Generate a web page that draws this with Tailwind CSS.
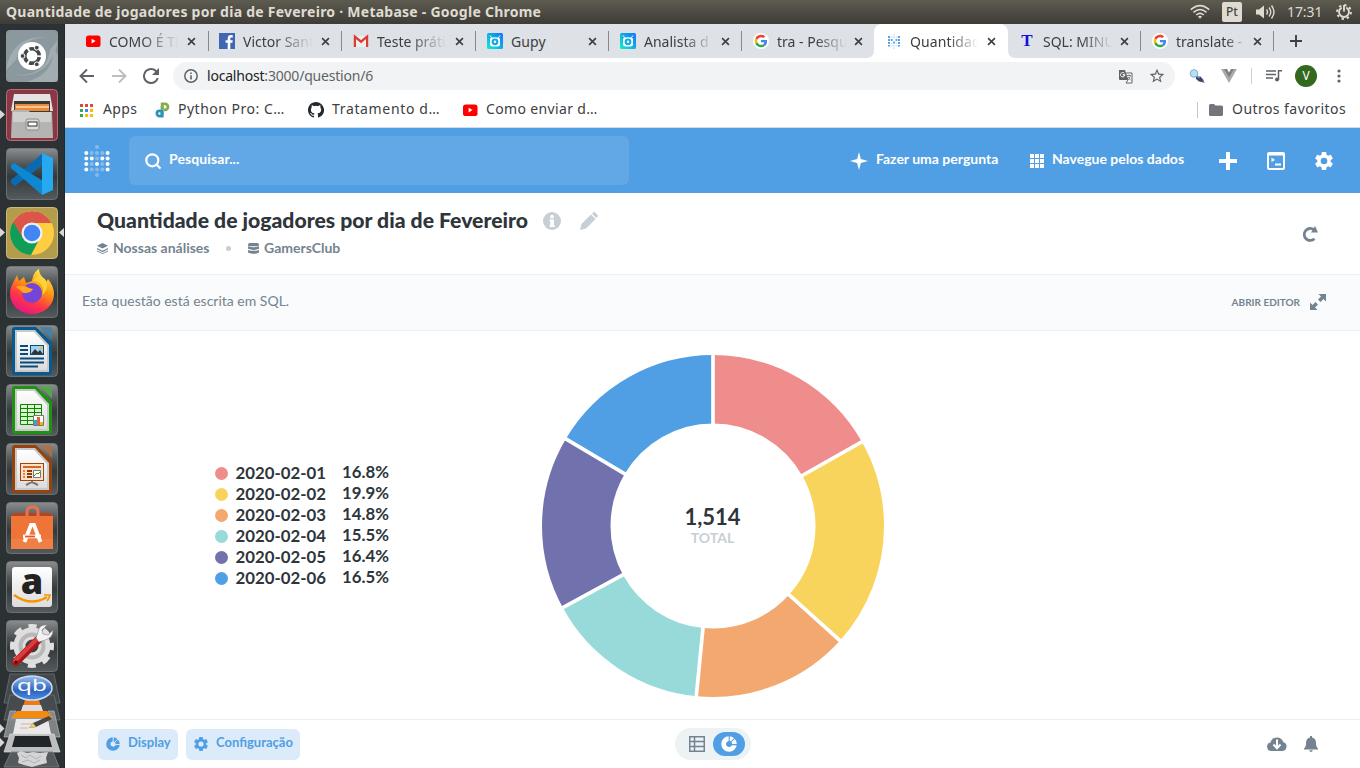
<!DOCTYPE html>
<html lang="pt">
<head>
<meta charset="utf-8">
<title>Quantidade de jogadores por dia de Fevereiro · Metabase</title>
<script src="https://cdn.jsdelivr.net/npm/@tailwindcss/browser@4"></script>
</head>
<body class="w-[1360px] h-[768px] overflow-hidden flex flex-col bg-white font-['Noto_Sans',sans-serif]">

<!-- shared symbols -->
<svg width="0" height="0" class="absolute">
  <defs>
    <linearGradient id="tile" x1="0" y1="0" x2="0" y2="1"><stop offset="0" stop-color="#8b8e8f"/><stop offset=".35" stop-color="#4a4f51"/><stop offset=".55" stop-color="#34393b"/><stop offset="1" stop-color="#555a5c"/></linearGradient>
    <linearGradient id="paper" x1="0" y1="0" x2="0" y2="1"><stop offset="0" stop-color="#fff"/><stop offset="1" stop-color="#dcdcdc"/></linearGradient>
    <linearGradient id="fire" x1=".8" y1="0" x2=".3" y2="1"><stop offset="0" stop-color="#fff44f"/><stop offset=".4" stop-color="#ff980e"/><stop offset=".7" stop-color="#ff3647"/><stop offset="1" stop-color="#e31587"/></linearGradient>
    <linearGradient id="gup" x1="0" y1="1" x2="1" y2="0"><stop offset="0" stop-color="#10f0c8"/><stop offset=".55" stop-color="#10a8e8"/><stop offset="1" stop-color="#1672ff"/></linearGradient>
    <linearGradient id="qbfill" x1="0" y1="0" x2="0" y2="1"><stop offset="0" stop-color="#9cc0ee"/><stop offset=".6" stop-color="#2a63bf"/><stop offset="1" stop-color="#4c8be0"/></linearGradient>
    <symbol id="x" viewBox="0 0 10 10"><path d="M1.2 1.2l7.6 7.6M8.8 1.2L1.2 8.8" stroke="#3c4043" stroke-width="1.8" fill="none"/></symbol>
    <symbol id="yt" viewBox="0 0 16 16"><rect x="1" y="2.5" width="14.5" height="11.5" rx="2.6" fill="#f00"/><path d="M6.600 5.800v4.600l4-2.300z" fill="#fff"/></symbol>
    <symbol id="goog" viewBox="0 0 48 48"><circle cx="24" cy="24" r="24" fill="#fff"/><g transform="translate(5 5) scale(.79)"><path fill="#EA4335" d="M24 9.5c3.54 0 6.71 1.22 9.21 3.6l6.85-6.85C35.9 2.38 30.47 0 24 0 14.62 0 6.51 5.38 2.56 13.22l7.98 6.19C12.43 13.72 17.74 9.5 24 9.5z"/><path fill="#4285F4" d="M46.98 24.55c0-1.57-.15-3.09-.38-4.55H24v9.02h12.94c-.58 2.96-2.26 5.48-4.78 7.18l7.73 6c4.51-4.18 7.09-10.36 7.09-17.65z"/><path fill="#FBBC05" d="M10.53 28.59c-.48-1.45-.76-2.99-.76-4.59s.27-3.14.76-4.59l-7.98-6.19C.92 16.46 0 20.12 0 24c0 3.88.92 7.54 2.56 10.78l7.97-6.19z"/><path fill="#34A853" d="M24 48c6.48 0 11.93-2.13 15.89-5.81l-7.73-6c-2.15 1.45-4.92 2.3-8.16 2.3-6.26 0-11.57-4.22-13.47-9.91l-7.98 6.19C6.51 42.62 14.62 48 24 48z"/></g></symbol>
    <symbol id="gupy" viewBox="0 0 16 16"><rect width="16" height="16" rx="1.5" fill="url(#gup)"/><path d="M3 2.500l1.700 2.300M13 2.500l-1.700 2.300" stroke="#fff" stroke-width="1"/><path d="M3 5.500q5-2.500 10 0v5.500q0 2.500-2.500 2.500h-5Q3 13.500 3 11z" fill="#fff"/><circle cx="8" cy="8.800" r="3.400" fill="#12a9e4"/><circle cx="8" cy="8.800" r="1.200" fill="#fff"/></symbol>
    <symbol id="gear" viewBox="2 2 20 20"><path fill-rule="evenodd" d="M19.430 12.980c.04-.32.07-.64.07-.98s-.03-.66-.07-.98l2.110-1.650c.19-.15.24-.42.12-.64l-2-3.460c-.12-.22-.39-.3-.61-.22l-2.490 1c-.52-.4-1.080-.73-1.690-.98l-.38-2.650C14.460 2.180 14.250 2 14 2h-4c-.25 0-.46.18-.49.42l-.38 2.650c-.61.25-1.170.59-1.690.98l-2.490-1c-.23-.09-.49 0-.61.22l-2 3.460c-.13.22-.07.49.12.64l2.110 1.650c-.04.32-.07.65-.07.98s.03.66.07.98l-2.110 1.650c-.19.15-.24.42-.12.64l2 3.460c.12.22.39.3.61.22l2.490-1c.52.4 1.080.73 1.690.98l.38 2.650c.03.24.24.42.49.42h4c.25 0 .46-.18.49-.42l.38-2.650c.61-.25 1.170-.59 1.690-.98l2.490 1c.23.09.49 0 .61-.22l2-3.460c.12-.22.07-.49-.12-.64zM12 15.700a3.700 3.700 0 1 1 0-7.400 3.700 3.700 0 0 1 0 7.400z" fill="currentColor"/></symbol>
    <symbol id="donut" viewBox="0 0 16 16"><circle cx="8" cy="8" r="5.400" fill="none" stroke="currentColor" stroke-width="4.800"/><path d="M8.200 5.800V0M9.800 6.200l4-4M10 8.600h6" stroke="var(--gap)" stroke-width="1.100"/></symbol>
    <symbol id="base" viewBox="0 0 52 52"><rect x=".5" y=".5" width="51" height="51" rx="4" fill="url(#tile)" stroke="#7d8182" stroke-opacity=".7"/></symbol>
    <symbol id="doc" viewBox="0 0 52 52"><path d="M6 5q0-3 3-3H30L46 18V47q0 3-3 3H9q-3 0-3-3V5z" fill="currentColor"/><path d="M34 2h9q3 0 3 3v10z" fill="currentColor" opacity=".8"/><path d="M34 2h9q3 0 3 3v10z" fill="#fff" opacity=".2"/><path d="M9 5h20l14 15v27H9z" fill="#c9c9c9"/><path d="M11 7h17l13 14v24H11z" fill="url(#paper)"/></symbol>
  </defs>
</svg>

<!-- desktop top panel -->
<header class="h-6 shrink-0 flex items-center justify-between pl-1.5 pr-2 bg-linear-to-b from-[#5e5b50] to-[#3e3c37] text-[#dfdbd2]">
  <div class="text-[14px] font-bold leading-6 tracking-[0.25px] whitespace-nowrap">Quantidade de jogadores por dia de Fevereiro · Metabase - Google Chrome</div>
  <div class="flex items-center">
    <svg class="w-5 h-4 mr-3" viewBox="0 0 20 16" fill="none" stroke="#dfdbd2" stroke-width="1.600"><path d="M.8 5.600Q10-2.500 19.200 5.600M3.500 8.300q6.500-5.600 13 0M6.200 11q3.800-3.200 7.600 0"/><path d="M8 12.500q2-1.500 4 0l-2 2.300z" fill="#dfdbd2" stroke="none"/></svg>
    <div class="w-5 h-5 rounded-xs bg-[#dfdbd2] text-[#454340] text-[12px] leading-5 font-medium text-center mr-[13px]">Pt</div>
    <svg class="w-5 h-4 mr-[12px]" viewBox="0 0 20 16"><path d="M1 5.500h3L9 1.500v13l-5-4H1z" fill="#dfdbd2"/><path d="M11.500 5.500q2 2.500 0 5M14 3.500q3.500 4.500 0 9M16.500 1.500q5 6.500 0 13" fill="none" stroke="#dfdbd2" stroke-width="1.400"/></svg>
    <div class="w-[37px] text-[14px] leading-6 tracking-[-0.1px] mr-3 whitespace-nowrap">17:31</div>
    <svg class="w-4 h-4" viewBox="0 0 16 16"><circle cx="8" cy="8" r="6.900" fill="none" stroke="#dfdbd2" stroke-width="2" stroke-dasharray="2.400 3.020"/><path d="M5.700 3.600a5 5 0 1 0 4.600 0M8 1v6.500" fill="none" stroke="#dfdbd2" stroke-width="1.900"/></svg>
  </div>
</header>

<div class="flex flex-1 min-h-0">
  <!-- launcher -->
  <aside class="relative w-[65px] shrink-0 bg-[#2c3133] border-r border-[#23282a] pt-1.5 pl-1.5 flex flex-col gap-[7px]">
    <svg class="w-[52px] h-[52px] shrink-0" viewBox="0 0 52 52"><rect width="52" height="52" rx="4" fill="#8b999f"/><path d="M0 40C4 16 20 4 44 8 28 6 14 12 10 30zM52 10C48 36 30 50 6 44c24 4 36-8 38-24zM20 52c16-4 28-14 28-34l4 8v26z" fill="#fff" opacity=".2"/><circle cx="26" cy="26" r="14" fill="#fff"/><circle cx="26" cy="26" r="7.300" fill="none" stroke="#43484c" stroke-width="3.600" stroke-dasharray="13.300 2" stroke-dashoffset="-1"/><circle cx="16.500" cy="26" r="2.400" fill="#43484c" stroke="#fff"/><circle cx="30.800" cy="17.700" r="2.400" fill="#43484c" stroke="#fff"/><circle cx="30.800" cy="34.300" r="2.400" fill="#43484c" stroke="#fff"/></svg>
    <svg class="w-[52px] h-[52px] shrink-0" viewBox="0 0 52 52"><rect x=".5" y=".5" width="51" height="51" rx="4" fill="#8c3744" stroke="#b07078"/><path d="M8 5h36l3 17H5z" fill="#e4e4e4"/><path d="M8 12h36v12H8z" fill="#3a3a38"/><path d="M9 15h34v7H9z" fill="#e88a3c"/><path d="M10 18h33" stroke="#ffd9a8" stroke-width="1.500"/><path d="M6 21h16l2 2h22l1 26H5z" fill="#b4b4b3"/><path d="M7 23h38v10H7z" fill="#cfcfce"/><rect x="20" y="30" width="13" height="11" rx="2" fill="#ddd" stroke="#8a8a8a"/><rect x="22" y="33" width="9" height="4" fill="#fff" stroke="#333"/></svg>
    <svg class="w-[52px] h-[52px] shrink-0" viewBox="0 0 52 52"><use href="#base"/><path d="M37 5L5 32v3l4 3 29-22z" fill="#0c6bb0"/><path d="M8 15L5 17v3l31 27 1-14z" fill="#0f88d2"/><path d="M36 5l11 5v32l-11 5z" fill="#27a9f2"/></svg>
    <svg class="w-[52px] h-[52px] shrink-0" viewBox="0 0 52 52"><rect x=".5" y=".5" width="51" height="51" rx="4" fill="#b39c4c" stroke="#cbb979"/><circle cx="26" cy="26" r="22" fill="#ffcd40"/><path d="M26 26L7 15A22 22 0 0 0 25 48l9-17z" fill="#109d58"/><path d="M7 15a22 22 0 0 1 38.500 1H26L17 31z" fill="#db5548"/><circle cx="26" cy="26" r="10.500" fill="#f1f1f1"/><circle cx="26" cy="26" r="8.300" fill="#4285f4"/></svg>
    <svg class="w-[52px] h-[52px] shrink-0" viewBox="0 0 52 52"><use href="#base"/><path d="M11 9l2 6 5-4 2 6 6-2c1-6 3-10 7-12 0 6 5 9 7 13l2-3c4 5 6 10 6 15a22 20 0 0 1-44 0c0-8 4-12 7-19z" fill="url(#fire)"/><circle cx="26" cy="27" r="10" fill="#7544d8"/><path d="M10 21q7-3 13 1l4 1c-2 4-6 4-10 4-2-3-4-4-7-6z" fill="#ffa51e"/><path d="M27 15c9 0 12 8 9 14 5-4 7-10 3-16l-6-4z" fill="#ffd43a"/></svg>
    <svg class="w-[52px] h-[52px] shrink-0 text-[#075a91]" viewBox="0 0 52 52"><use href="#base"/><use href="#doc"/><path d="M14 21h8M14 25h8M14 29h8M14 33.500h24M14 37.500h24M14 41.500h18" stroke="#0a4b79" stroke-width="2"/><rect x="24.500" y="20.500" width="13" height="9" fill="#9ed4f2" stroke="#0a4b79"/><path d="M25 29l4-5 3 3 2-2 3 4z" fill="#333"/><circle cx="35" cy="23" r="1.500" fill="#e9b93c"/></svg>
    <svg class="w-[52px] h-[52px] shrink-0 text-[#1d9310]" viewBox="0 0 52 52"><use href="#base"/><use href="#doc"/><path d="M14.500 20.500h21v20h-21z" fill="#d9f7cf"/><path d="M14.500 20.500h21v20h-21zM14.500 24.500h21M14.500 28.500h21M14.500 32.500h21M14.500 36.500h21M21.500 20.500v20M28.500 20.500v20" stroke="#138008" fill="none"/><path d="M27.500 31.500h10v10h-10z" fill="#fff" stroke="#777"/><path d="M28 36h3v5h-3z" fill="#29a8e0"/><path d="M31 33h3v8h-3z" fill="#e2632c"/><path d="M34 38h3v3h-3z" fill="#f0b800"/></svg>
    <svg class="w-[52px] h-[52px] shrink-0 text-[#97430e]" viewBox="0 0 52 52"><use href="#base"/><use href="#doc"/><rect x="14.500" y="20.500" width="23" height="17" fill="#fbe0cb" stroke="#a14409"/><path d="M17 24h18" stroke="#d2691e" stroke-width="2"/><path d="M17 28h2M17 31h2M17 34h2" stroke="#e78444" stroke-width="1.800"/><path d="M21 28h5M21 31h5M21 34h5" stroke="#8e3a08" stroke-width="1.800"/><path d="M27.500 27.500h7v7h-7z" fill="#fff" stroke="#777"/><path d="M28 33l3-3 1 1 2-2" stroke="#2d9a2d" fill="none"/><path d="M26 38v1l-6 3M26 39l6 3" stroke="#777" stroke-width="2" fill="none"/></svg>
    <svg class="w-[52px] h-[52px] shrink-0" viewBox="0 0 52 52"><use href="#base"/><path d="M7 11h38l2 5H5z" fill="#b8441c"/><path d="M5 14h42v33H5z" fill="#ee7537"/><path d="M5 37h42v10H5z" fill="#f07f45"/><path d="M21 18V10q0-5 5-5h1q5 0 5 5v8" fill="none" stroke="#e8724e" stroke-width="3"/><path d="M18.500 40L25 23h3l6.500 17" fill="none" stroke="#fff" stroke-width="3.800"/><path d="M17 34.500h18" stroke="#fff" stroke-width="3.600"/><path d="M19 34.500h10" stroke="#e95420" stroke-width="1.800"/></svg>
    <svg class="w-[52px] h-[52px] shrink-0" viewBox="0 0 52 52"><use href="#base"/><rect x="6" y="6" width="40" height="40" rx="3" fill="url(#paper)"/><text x="26" y="33" text-anchor="middle" font-family="Open Sans" font-weight="800" font-size="36" fill="#222">a</text><path d="M8 34q17 12 33 2" fill="none" stroke="#f79400" stroke-width="2.600"/><path d="M38 34h6q-1 4-3 6" fill="none" stroke="#f79400" stroke-width="1.700"/></svg>
    <svg class="w-[52px] h-[52px] shrink-0" viewBox="0 0 52 52"><use href="#base"/><circle cx="26" cy="26" r="19.500" fill="none" stroke="#e1e1e1" stroke-width="5" stroke-dasharray="8 7.310" stroke-dashoffset="4"/><circle cx="26" cy="26" r="12.500" fill="none" stroke="#dedede" stroke-width="12"/><circle cx="26" cy="26" r="11.500" fill="none" stroke="#b8b8b8" stroke-width="4"/><path d="M10 42L32 20" stroke="#a8161b" stroke-width="8" stroke-linecap="round"/><path d="M9 41L30 20" stroke="#d83c3c" stroke-width="4" stroke-linecap="round"/><circle cx="10" cy="42" r="1.600" fill="#500"/><path d="M30 18l3 4 6-2q8-2 8-10l-5 5-5-1-1-4 5-5q-8-1-9 7z" fill="#f2f2f2" stroke="#888" stroke-width=".6"/></svg>
    <!-- folded launcher stack -->
    <svg class="w-[58px] h-[96px] shrink-0 -ml-[3px] -mt-[6px]" viewBox="0 0 58 96"><g stroke="#74797b" stroke-opacity=".7"><path d="M7 1h44l6 29H1z" fill="#43484a"/><path d="M7 22h44l6 25H1z" fill="#454b4e"/></g><path d="M22 27h14l4 14H18z" fill="#ee7c16"/><path d="M20 32h18l2 6H18z" fill="#ddd"/><ellipse cx="29" cy="15" rx="20" ry="12" fill="url(#qbfill)" stroke="#c8dcf4" stroke-width="1.500"/><g transform="translate(29 18) scale(1.1 .75)"><text text-anchor="middle" font-family="Noto Sans" font-size="22" fill="#fff">qb</text></g><path d="M7 38h6l-4 7h40l-4-7h6l6 26H1z" fill="#9c9fa0" fill-opacity=".75" stroke="#b7b9ba" stroke-width=".7"/><path d="M14 38h30l6 7H8z" fill="#f58a12"/><path d="M13 46h32l3 15H10z" fill="#e9e9e9"/><path d="M18 51h14M17 55h8" stroke="#d99" stroke-width=".8"/><path d="M26 55l4-5 16-7 3 3-16 8z" fill="#464646"/><path d="M26 55l4-5 3 4z" fill="#e8d266"/><path d="M7 61h44l6 18H1z" fill="#bcbebf" stroke="#ddd" stroke-width=".7"/><path d="M12 63h34l3 11H9z" fill="#222527"/><path d="M8 79h42l6 15H1z" fill="#555b5d" stroke="#74797b"/><path d="M14 80l4-2 6 2 6-1 7 1 8-1-2 6 1 5-8 2-7 2-8-2-6-2 1-5z" fill="#d4d6d6"/><path d="M18 82l5 3 4-3 6 4 5-3M19 89l6-2 6 3 6-3" stroke="#aeb2b2" fill="none"/></svg>
    <!-- running-window markers -->
    <svg class="absolute left-0 top-0 w-[64px] h-[744px] pointer-events-none" viewBox="0 24 64 744" fill="#d8d8d8"><path d="M0 110l5 4.500-5 4.500zM0 228l5 4.500-5 4.500zM64 228l-5 4.500 5 4.500zM0 724l4.500 4.500L0 733zM0 738l4.500 4.500L0 747z"/></svg>
  </aside>

  <div class="flex-1 min-w-0 flex flex-col">
    <!-- tab strip -->
    <nav class="h-[34px] shrink-0 flex bg-[#dee1e6] pl-[10px] text-[14px] text-[#3c4043]">
      <div class="w-[133px] shrink-0 flex items-center pl-[10px]"><svg class="w-4 h-4 shrink-0"><use href="#yt"/></svg><span class="ml-2 w-[71px] overflow-hidden whitespace-nowrap mask-r-from-45% mask-r-to-98%">COMO É TR</span><svg class="w-[9px] h-[9px] ml-[7px]"><use href="#x"/></svg></div>
      <div class="w-[133px] shrink-0 flex items-center"><i class="w-px h-5 bg-[#85888d]"></i><svg class="w-4 h-4 shrink-0 ml-[10px]" viewBox="0 0 16 16"><path fill="#4267b2" d="M0 0h16v16H0z"/><path d="M8.700 16V9.700H6.600V7.200h2.100V5.400c0-2.100 1.300-3.300 3.200-3.300l1.900.1v2.300h-1.300c-1 0-1.200.5-1.200 1.200v1.500h2.400l-.3 2.500h-2.100V16z" fill="#fff"/></svg><span class="ml-2 w-[71px] overflow-hidden whitespace-nowrap mask-r-from-45% mask-r-to-98%">Victor Sant</span><svg class="w-[9px] h-[9px] ml-[7px]"><use href="#x"/></svg></div>
      <div class="w-[134px] shrink-0 flex items-center"><i class="w-px h-5 bg-[#85888d]"></i><svg class="w-4 h-4 shrink-0 ml-[11px]" viewBox="0 0 16 16"><path d="M1 3h14v11H1z" fill="#eee"/><path d="M1.900 14V3.600L8 8.700l6.100-5.100V14" fill="none" stroke="#dc3c2f" stroke-width="2.200"/></svg><span class="ml-2 w-[71px] overflow-hidden whitespace-nowrap mask-r-from-45% mask-r-to-98%">Teste práti</span><svg class="w-[9px] h-[9px] ml-[7px]"><use href="#x"/></svg></div>
      <div class="w-[133px] shrink-0 flex items-center"><i class="w-px h-5 bg-[#85888d]"></i><svg class="w-4 h-4 shrink-0 ml-[11px]"><use href="#gupy"/></svg><span class="ml-2 w-[71px] whitespace-nowrap tracking-[0.1px]">Gupy</span><svg class="w-[9px] h-[9px] ml-[6px]"><use href="#x"/></svg></div>
      <div class="w-[133px] shrink-0 flex items-center"><i class="w-px h-5 bg-[#85888d]"></i><svg class="w-4 h-4 shrink-0 ml-[11px]"><use href="#gupy"/></svg><span class="ml-2 w-[71px] overflow-hidden whitespace-nowrap mask-r-from-55% mask-r-to-98%">Analista d</span><svg class="w-[9px] h-[9px] ml-[6px]"><use href="#x"/></svg></div>
      <div class="w-[133px] shrink-0 flex items-center"><i class="w-px h-5 bg-[#85888d]"></i><svg class="w-4 h-4 shrink-0 ml-[11px]"><use href="#goog"/></svg><span class="ml-2 w-[71px] overflow-hidden whitespace-nowrap mask-r-from-55% mask-r-to-98%">tra - Pesqu</span><svg class="w-[9px] h-[9px] ml-[6px]"><use href="#x"/></svg></div>
      <div class="w-[134px] shrink-0 flex items-center bg-white rounded-t-lg pl-[12px] relative">
        <svg class="absolute -left-2 bottom-0 w-2 h-2" viewBox="0 0 8 8"><path d="M8 0v8H0q8 0 8-8" fill="#fff"/></svg><svg class="absolute -right-2 bottom-0 w-2 h-2" viewBox="0 0 8 8"><path d="M0 0v8h8Q0 8 0 0" fill="#fff"/></svg>
        <svg class="w-4 h-4 shrink-0" viewBox="0 0 16 16"><g fill="#58a3e4"><path d="M2 3h2v2H2zM2 6h2v2H2zM2 9h2v2H2zM2 12h2v1.500H2zM12 3h2v2h-2zM12 6h2v2h-2zM12 9h2v2h-2zM12 12h2v1.500h-2zM4.800 6h1.800v2H4.800zM9.500 6h1.800v2H9.500zM7.100 8.500h1.900v2H7.100z"/></g><path d="M7.100 1h1.900v1.500H7.100zM4.800 3h1.800v2H4.800zM7.100 3.500h1.900v2H7.100zM9.500 3h1.800v2H9.500zM4.800 9.500h1.800v1.500H4.800zM9.500 9.500h1.800v1.500H9.500zM4.800 12h1.800v1.500H4.800zM7.100 12h1.900v1.500H7.100zM9.500 12h1.800v1.500H9.500zM7.100 14.500h1.900V16H7.100z" fill="#d8eafa"/></svg><span class="ml-2 w-[70px] overflow-hidden whitespace-nowrap tracking-[0.1px] mask-r-from-55% mask-r-to-98%">Quantidad</span><svg class="w-[9px] h-[9px] ml-[7px]"><use href="#x"/></svg></div>
      <div class="w-[132px] shrink-0 flex items-center pl-[11px]"><span class="w-4 text-center font-['Liberation_Serif',serif] font-bold text-[17px] text-[#1010e0]">T</span><span class="ml-2 w-[71px] overflow-hidden whitespace-nowrap mask-r-from-55% mask-r-to-98%">SQL: MINU</span><svg class="w-[9px] h-[9px] ml-[6px]"><use href="#x"/></svg></div>
      <div class="w-[133px] shrink-0 flex items-center"><i class="w-px h-5 bg-[#85888d]"></i><svg class="w-4 h-4 shrink-0 ml-[11px]"><use href="#goog"/></svg><span class="ml-2 w-[71px] whitespace-nowrap mask-r-from-70% mask-r-to-100%">translate -</span><svg class="w-[9px] h-[9px] ml-[6px]"><use href="#x"/></svg></div>
      <div class="flex items-center"><i class="w-px h-5 bg-[#85888d]"></i><svg class="w-3 h-3 ml-4" viewBox="0 0 12 12"><path d="M6 0v12M0 6h12" stroke="#3c4043" stroke-width="1.900"/></svg></div>
    </nav>

    <!-- address bar -->
    <div class="h-[36px] shrink-0 flex items-center pl-[14px] text-[#5f6368]">
      <svg class="w-4 h-4 shrink-0" viewBox="0 0 16 16" fill="none" stroke="#5f6368" stroke-width="1.900"><path d="M15 8H2.500M8 1.500L1.500 8 8 14.500"/></svg>
      <svg class="w-4 h-4 ml-4 shrink-0" viewBox="0 0 16 16" fill="none" stroke="#bcbec1" stroke-width="1.900"><path d="M1 8h12.500M8 1.500L14.500 8 8 14.500"/></svg>
      <svg class="w-4 h-4 ml-4 shrink-0" viewBox="4 4 16 16"><path d="M17.650 6.350A7.960 7.960 0 0 0 12 4a8 8 0 1 0 7.730 10h-2.080A6 6 0 1 1 12 6c1.660 0 3.140.69 4.220 1.780L13 11h7V4z" fill="#5f6368"/></svg>
      <div class="ml-[14px] w-[1002px] shrink-0 h-7 rounded-full bg-[#f1f3f4] flex items-center pl-[11px] pr-[10px]">
        <svg class="w-[14px] h-[14px]" viewBox="0 0 14 14"><circle cx="7" cy="7" r="6.200" fill="none" stroke="#5f6368" stroke-width="1.500"/><path d="M7 6.200v4.300M7 3.400v1.500" stroke="#5f6368" stroke-width="1.600"/></svg>
        <span class="ml-[9px] pb-px text-[14px] tracking-[-0.2px] whitespace-nowrap"><span class="text-[#202124]">localhost</span>:3000/question/6</span>
        <svg class="w-[15px] h-[15px] ml-auto" viewBox="0 0 15 15"><path d="M1 1h6l3 10H2q-1 0-1-1z" fill="#5f6368"/><path d="M7.500 4H14v10H8l2-3z" fill="#fff" stroke="#5f6368"/><path d="M6.500 5.500H4.800M6.400 4.300A2.200 2.200 0 1 0 6.900 6H5" stroke="#fff" fill="none"/><path d="M9 6.500h4M11 5.500v1M12.300 7q-.8 3-2.300 4M10 8l3 3.500" stroke="#5f6368" stroke-width=".8" fill="none"/></svg>
        <svg class="w-4 h-4 ml-[16px]" viewBox="1 1 22 22"><path d="M22 9.240l-7.190-.62L12 2 9.190 8.630 2 9.240l5.460 4.730L5.820 21 12 17.270 18.180 21l-1.630-7.030zM12 15.400l-3.760 2.270 1-4.280-3.320-2.880 4.380-.38L12 6.100l1.710 4.040 4.380.38-3.320 2.880 1 4.280z" fill="#5f6368"/></svg>
      </div>
      <svg class="w-4 h-4 ml-[14px] shrink-0" viewBox="0 0 16 16"><path d="M7 8.500l4.500 0 3 3.500.5 2.500-5-1-3-2.500z" fill="#344a71"/><circle cx="5" cy="5.500" r="3.800" fill="#b3e1fa" stroke="#8dabc0"/><path d="M7.500 8l3 2" stroke="#79a" stroke-width="1.500"/><path d="M13.500 13l2 1.500" stroke="#c55"/></svg>
      <svg class="w-4 h-[14px] ml-4 shrink-0" viewBox="0 0 16 14"><path d="M0 0h4l4 7 4-7h4L8 14z" fill="#ababab"/><path d="M3 0h3l2 3.500L10 0h3L8 8.500z" fill="#808080"/></svg>
      <i class="w-px h-4 bg-[#cdd0d3] ml-[14px] shrink-0"></i>
      <svg class="w-4 h-4 ml-[14px] shrink-0" viewBox="0 0 16 16" fill="none" stroke="#5f6368" stroke-width="1.500"><path d="M0 3h10M0 6.500h10M0 10h7M12.500 12V2.800H16"/><circle cx="11" cy="11.500" r="2" fill="#5f6368" stroke="none"/></svg>
      <span class="ml-[13px] w-[22px] h-[22px] rounded-full bg-[#33691e] text-white text-[12px] leading-[22px] text-center shrink-0">V</span>
      <svg class="w-1 h-[14px] ml-[20px] shrink-0" viewBox="0 0 4 14" fill="#5f6368"><circle cx="2" cy="2" r="1.600"/><circle cx="2" cy="7" r="1.600"/><circle cx="2" cy="12" r="1.600"/></svg>
    </div>

    <!-- bookmarks -->
    <div class="h-[34px] shrink-0 flex items-center border-b border-[#d5dbe2] pl-[15px] pr-[14px] pb-px text-[14px] leading-5 text-[#3c4043] whitespace-nowrap">
      <svg class="w-[13px] h-[13px]" viewBox="0 0 13 13"><path d="M0 0h3v3H0zM5 0h3v3H5zM10 0h3v3h-3z" fill="#ea4335"/><path d="M0 5h3v3H0z" fill="#34a853"/><path d="M5 5h3v3H5z" fill="#4285f4"/><path d="M10 5h3v3h-3z" fill="#fbbc05"/><path d="M0 10h3v3H0z" fill="#34a853"/><path d="M5 10h3v3H5zM10 10h3v3h-3z" fill="#fbbc05"/></svg>
      <span class="ml-[10px] w-[52px] pb-[3px] tracking-[0.4px]">Apps</span>
      <svg class="w-4 h-4" viewBox="0 0 16 16" fill="none" stroke-width="2.800"><circle cx="4.500" cy="11.500" r="2.600" stroke="#2f93b9"/><path d="M7.200 15.500V4" stroke="#2f93b9"/><path d="M7.200 8V1.800H10a3 3 0 0 1 0 6H9" stroke="#86ad4a"/></svg>
      <span class="ml-[7px] w-[130px] pb-[3px] tracking-[0.5px]">Python Pro: C…</span>
      <svg class="w-4 h-4" viewBox="0 0 16 16"><path fill="#24292e" d="M8 0C3.580 0 0 3.580 0 8c0 3.540 2.290 6.530 5.470 7.590.4.070.55-.17.55-.38v-1.490c-2.010.37-2.530-.49-2.690-.94-.09-.23-.48-.94-.82-1.130-.28-.15-.68-.52-.01-.53.63-.01 1.080.58 1.230.82.72 1.210 1.870.87 2.330.66.07-.52.28-.87.51-1.070-1.780-.2-3.640-.89-3.640-3.950 0-.87.31-1.590.82-2.150-.08-.2-.36-1.020.08-2.120 0 0 .67-.21 2.200.82a7.600 7.600 0 0 1 4 0c1.530-1.040 2.200-.82 2.200-.82.44 1.100.16 1.920.08 2.120.51.56.82 1.270.82 2.150 0 3.070-1.870 3.750-3.650 3.950.29.25.54.73.54 1.480v2.200c0 .21.15.46.55.38A8 8 0 0 0 8 0z"/></svg>
      <span class="ml-[8px] w-[130px] pb-[3px] tracking-[0.65px]">Tratamento d…</span>
      <svg class="w-4 h-4"><use href="#yt"/></svg>
      <span class="ml-[8px] pb-[3px] tracking-[0.35px]">Como enviar d…</span>
      <i class="w-px h-4 bg-[#c4c7cb] ml-auto"></i>
      <svg class="w-[14px] h-3 ml-[11px]" viewBox="0 0 14 12"><path d="M1.500 0H5l1.500 1.500h6Q14 1.500 14 3v7.500q0 1.500-1.500 1.500h-11Q0 12 0 10.500v-9Q0 0 1.500 0z" fill="#72767a"/></svg>
      <span class="ml-[9px] w-[114px] pb-[3px] tracking-[0.45px]">Outros favoritos</span>
    </div>

    <!-- Metabase application -->
    <main class="flex-1 min-h-0 flex flex-col font-['Lato',sans-serif] text-[#2e353b]">
      <div class="h-[65px] shrink-0 bg-[#509ee3] flex items-center pl-[19px] pr-[26px] text-white text-[14px] font-bold">
        <svg class="w-[26px] h-8" viewBox="0 0 26 32" fill="#fff"><g opacity=".3"><circle cx="13" cy="2" r="2"/><circle cx="13" cy="30" r="2"/><circle cx="7.700" cy="8" r="2"/><circle cx="13" cy="8" r="2"/><circle cx="18.300" cy="8" r="2"/><circle cx="13" cy="13.500" r="2"/><circle cx="7.700" cy="19" r="2"/><circle cx="18.300" cy="19" r="2"/><circle cx="7.700" cy="24.500" r="2"/><circle cx="13" cy="24.500" r="2"/><circle cx="18.300" cy="24.500" r="2"/></g><circle cx="2.300" cy="8" r="2"/><circle cx="2.300" cy="13.500" r="2"/><circle cx="2.300" cy="19" r="2"/><circle cx="2.300" cy="24.500" r="2"/><circle cx="23.600" cy="8" r="2"/><circle cx="23.600" cy="13.500" r="2"/><circle cx="23.600" cy="19" r="2"/><circle cx="23.600" cy="24.500" r="2"/><circle cx="7.700" cy="13.500" r="2"/><circle cx="18.300" cy="13.500" r="2"/><circle cx="13" cy="19" r="2"/></svg>
        <div class="ml-[19px] w-[500px] h-[49px] rounded-md bg-[#63a8e6] flex items-center pl-4">
          <svg class="w-4 h-4" viewBox="0 0 16 16" fill="none" stroke="#fff" stroke-width="2.200"><circle cx="7.300" cy="7.300" r="6"/><path d="M11.500 11.500l4 4"/></svg>
          <span class="ml-2 pb-[3px] leading-5 tracking-[0.1px]">Pesquisar...</span>
        </div>
        <svg class="w-[18px] h-[18px] ml-auto" viewBox="0 0 18 18"><path d="M9 0l1.900 7.100L18 9l-7.100 1.900L9 18l-1.900-7.100L0 9l7.100-1.900z" fill="#fff"/></svg>
        <span class="ml-2 w-[122px] pb-[3px] leading-5 whitespace-nowrap">Fazer uma pergunta</span>
        <svg class="w-[14px] h-[14px] ml-8" viewBox="0 0 14 14" fill="#fff"><path d="M0 0h4v4H0zM5 0h4v4H5zM10 0h4v4h-4zM0 5h4v4H0zM5 5h4v4H5zM10 5h4v4h-4zM0 10h4v4H0zM5 10h4v4H5zM10 10h4v4h-4z"/></svg>
        <span class="ml-2 w-[132px] pb-[3px] leading-5 whitespace-nowrap">Navegue pelos dados</span>
        <svg class="w-[18px] h-[18px] ml-[35px]" viewBox="0 0 18 18"><path d="M9 0v18M0 9h18" stroke="#fff" stroke-width="4"/></svg>
        <svg class="w-[18px] h-[18px] ml-[30px]" viewBox="0 0 18 18"><path fill-rule="evenodd" d="M2 0h14q2 0 2 2v14q0 2-2 2H2q-2 0-2-2V2Q0 0 2 0zm0 3.500v12.500h14V3.500z" fill="#fff"/><path d="M4.500 5.500L8 8l-3.500 2z" fill="#fff"/><path d="M8 12.500h6" stroke="#fff" stroke-width="2"/></svg>
        <svg class="w-5 h-[18px] ml-[29px]"><use href="#gear"/></svg>
      </div>

      <div class="h-[82px] shrink-0 border-b border-[#edf0f1] flex items-center pl-8 pr-[42px]">
        <div class="flex flex-col">
          <div class="flex items-center h-7">
            <h1 class="w-[430px] text-[21.2px] font-black leading-7 whitespace-nowrap">Quantidade de jogadores por dia de Fevereiro</h1>
            <svg class="w-[18px] h-[18px] ml-4 mt-[2px]" viewBox="0 0 18 18"><circle cx="9" cy="9" r="9" fill="#c7cfd4"/><circle cx="9" cy="4.700" r="1.900" fill="#fff"/><path d="M6.500 7.500H11v6h1v1.500H6.500V13.500h.7V9h-.7z" fill="#fff"/></svg>
            <svg class="w-[18px] h-[18px] ml-[19px] mt-[2px]" viewBox="0 0 18 18"><path d="M0 18l1.500-6L11 2.500l4.500 4.500L6 16.500zM12 1.700L13.500.2q.7-.4 1.300.1l2.900 2.900q.5.6 0 1.300L16.300 6z" fill="#c7cfd4"/></svg>
          </div>
          <div class="flex items-center h-7 text-[14px] font-bold text-[#74838f]">
            <svg class="w-[11px] h-[11px] mt-[2px]" viewBox="0 0 12 12" fill="#74838f"><path d="M6 0l6 3-6 3-6-3z"/><path d="M0 5.500l6 3 6-3v1.300L6 10 0 6.800zM0 8.300l6 3 6-3v1L6 12 0 9.300z"/></svg>
            <span class="ml-[5px] w-[97px] whitespace-nowrap">Nossas análises</span>
            <i class="w-[5px] h-[5px] rounded-full bg-[#c7cfd4] ml-[16px] mt-[2px]"></i>
            <svg class="w-[11px] h-[11px] ml-[17px] mt-[2px]" viewBox="0 0 12 12" fill="#74838f"><rect y="0" width="12" height="3.600" rx="1.800"/><path d="M0 3.500q6 2 12 0v2.800q-6 2.500-12 0zM0 7.500q6 2 12 0v2.800q-6 2.900-12 0z"/></svg>
            <span class="ml-[5px] whitespace-nowrap">GamersClub</span>
          </div>
        </div>
        <svg class="w-4 h-4 ml-auto" viewBox="0 0 16 16"><path d="M12.500 12.700A6 6 0 1 1 12 3.800" fill="none" stroke="#74838f" stroke-width="2.800"/><path d="M13 0l3 6.500H9z" fill="#74838f"/></svg>
      </div>

      <div class="h-[56px] shrink-0 bg-[#f9fbfc] border-b border-[#edf0f1] flex items-center justify-between pl-[17px] pr-[34px] text-[#74838f]">
        <span class="text-[14px] pb-[4px]">Esta questão está escrita em SQL.</span>
        <div class="flex items-center"><span class="text-[10px] font-bold whitespace-nowrap">ABRIR EDITOR</span>
        <svg class="w-4 h-4 ml-[10px] -mt-px" viewBox="0 0 16 16" fill="#74838f"><path d="M8.500 0H16v7.500l-2.500-2.500-3 3-2.500-2.500 3-3zM0 8.500L2.500 11l3-3L8 10.500l-3 3L7.500 16H0z"/></svg></div>
      </div>

      <!-- chart -->
      <section class="flex-1 min-h-0 flex items-center pl-[150px]">
        <div class="w-[327px] flex flex-col text-[16.800px] font-bold pt-[1px]">
          <div class="flex items-center h-[21px]"><i class="w-[13px] h-[13px] rounded-full bg-[#ef8c8c]"></i><span class="ml-[7.500px] w-[106.500px]">2020-02-01</span><span class="pb-[2px]">16.8%</span></div>
          <div class="flex items-center h-[21px]"><i class="w-[13px] h-[13px] rounded-full bg-[#f9d45c]"></i><span class="ml-[7.500px] w-[106.500px]">2020-02-02</span><span class="pb-[2px]">19.9%</span></div>
          <div class="flex items-center h-[21px]"><i class="w-[13px] h-[13px] rounded-full bg-[#f2a86f]"></i><span class="ml-[7.500px] w-[106.500px]">2020-02-03</span><span class="pb-[2px]">14.8%</span></div>
          <div class="flex items-center h-[21px]"><i class="w-[13px] h-[13px] rounded-full bg-[#98d9d9]"></i><span class="ml-[7.500px] w-[106.500px]">2020-02-04</span><span class="pb-[2px]">15.5%</span></div>
          <div class="flex items-center h-[21px]"><i class="w-[13px] h-[13px] rounded-full bg-[#7172ad]"></i><span class="ml-[7.500px] w-[106.500px]">2020-02-05</span><span class="pb-[2px]">16.4%</span></div>
          <div class="flex items-center h-[21px]"><i class="w-[13px] h-[13px] rounded-full bg-[#509ee3]"></i><span class="ml-[7.500px] w-[106.500px]">2020-02-06</span><span class="pb-[2px]">16.5%</span></div>
        </div>
        <svg class="w-[342px] h-[342px] mt-[2px]" viewBox="-171 -171 342 342">
          <g transform="rotate(-90)" fill="none" stroke-width="68.500">
            <circle r="136.750" pathLength="1000" stroke="#ef8c8c" stroke-dasharray="168 832"/>
            <circle r="136.750" pathLength="1000" stroke="#f9d45c" stroke-dasharray="199 801" stroke-dashoffset="-168"/>
            <circle r="136.750" pathLength="1000" stroke="#f2a86f" stroke-dasharray="148 852" stroke-dashoffset="-367"/>
            <circle r="136.750" pathLength="1000" stroke="#98d9d9" stroke-dasharray="155 845" stroke-dashoffset="-515"/>
            <circle r="136.750" pathLength="1000" stroke="#7172ad" stroke-dasharray="165 835" stroke-dashoffset="-670"/>
            <circle r="136.750" pathLength="1000" stroke="#509ee3" stroke-dasharray="165 835" stroke-dashoffset="-835"/>
          </g>
          <g stroke="#fff" stroke-width="3.700"><path d="M0-100V-173"/><path d="M0-100V-173" transform="rotate(60.500)"/><path d="M0-100V-173" transform="rotate(132.100)"/><path d="M0-100V-173" transform="rotate(185.600)"/><path d="M0-100V-173" transform="rotate(241.500)"/><path d="M0-100V-173" transform="rotate(300.600)"/></g>
          <g text-anchor="middle" font-family="Lato" font-weight="700"><text x="-.5" y="-1.500" font-size="22" fill="#2e353b">1,514</text><text x="-.5" y="17" font-size="14" fill="#c7cfd4">TOTAL</text></g>
        </svg>
      </section>

      <!-- footer -->
      <footer class="h-[49px] shrink-0 border-t border-[#edf0f1] flex items-center pl-[33px] pr-[42px] text-[#509ee3] text-[13px] font-bold">
        <div class="w-[80px] h-[31px] rounded-md bg-[#dcebf9] flex items-center pl-2 [--gap:#dcebf9]"><svg class="w-[14px] h-[14px]"><use href="#donut"/></svg><span class="ml-[8px] pb-[2px]">Display</span></div>
        <div class="ml-2 w-[114px] h-[31px] rounded-md bg-[#dcebf9] flex items-center pl-2"><svg class="w-[14px] h-[14px]"><use href="#gear"/></svg><span class="ml-[8px] pb-[2px]">Configuração</span></div>
        <div class="ml-[375px] w-[76px] h-8 rounded-full bg-[#edf2f5] flex items-center pl-[14px]">
          <svg class="w-4 h-4" viewBox="0 0 16 16" fill="none" stroke="#74838f" stroke-width="1.500"><path d="M.75.75h14.500v14.500H.75zM.75 5.500h14.500M.75 10.500h14.500M5.500.75v14.500"/></svg>
          <div class="ml-2 w-8 h-6 rounded-full bg-[#509ee3] text-white flex items-center justify-center [--gap:#509ee3]"><svg class="w-4 h-4"><use href="#donut"/></svg></div>
        </div>
        <svg class="w-5 h-[14px] ml-auto" viewBox="0 0 20 14"><path d="M15 14H4.500A4.300 4.300 0 0 1 3.500 5.500 6.600 6.600 0 0 1 16.200 5 4.600 4.600 0 0 1 15 14z" fill="#74838f"/><path d="M10 2.500v8M6.500 7.500L10 11.300l3.500-3.800" stroke="#fff" stroke-width="2" fill="none"/></svg>
        <svg class="w-[14px] h-4 ml-[17px]" viewBox="0 0 14 16"><path d="M6 0h2v1.500c3 .6 4 3 4 5.500 0 3 .5 4 2 5.500V13.500H0v-1C1.500 11 2 10 2 7c0-2.500 1-4.900 4-5.500zM5.200 14.200h3.600Q8.500 16 7 16t-1.800-1.800z" fill="#74838f"/></svg>
      </footer>
    </main>
  </div>
</div>
</body>
</html>
